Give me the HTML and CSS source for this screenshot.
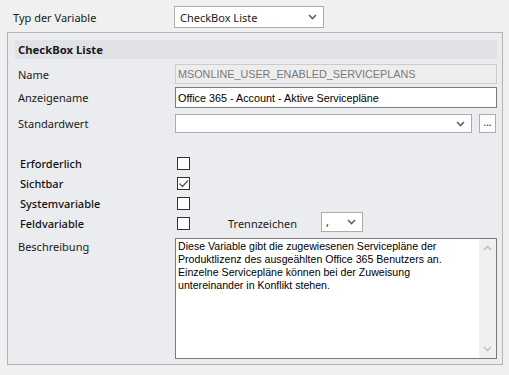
FILE: index.html
```html
<!DOCTYPE html>
<html lang="de">
<head>
    <meta charset="UTF-8">
    <title>Variable bearbeiten</title>
    <link rel="stylesheet" href="styles.css">
</head>
<body>
    <div class="top-row">
        <span class="label top-label">Typ der Variable</span>
        <div class="combo type-combo">
            <span class="combo-text">CheckBox Liste</span>
            <svg class="chevron" width="9" height="6" viewBox="0 0 9 6"><polyline points="1,1 4.5,4.5 8,1" fill="none" stroke="#606060" stroke-width="1.6"/></svg>
        </div>
    </div>

    <div class="panel">
        <div class="panel-head">CheckBox Liste</div>

        <div class="row row-name">
            <span class="label">Name</span>
            <div class="textbox disabled">MSONLINE_USER_ENABLED_SERVICEPLANS</div>
        </div>

        <div class="row row-display">
            <span class="label">Anzeigename</span>
            <div class="textbox active">Office 365 - Account - Aktive Servicepläne</div>
        </div>

        <div class="row row-default">
            <span class="label">Standardwert</span>
            <div class="combo default-combo">
                <span class="combo-text"></span>
                <svg class="chevron" width="9" height="6" viewBox="0 0 9 6"><polyline points="1,1 4.5,4.5 8,1" fill="none" stroke="#606060" stroke-width="1.6"/></svg>
            </div>
            <div class="dots-btn">...</div>
        </div>

        <div class="checks">
            <div class="check-row">
                <span class="label check-label">Erforderlich</span>
                <span class="box"></span>
            </div>
            <div class="check-row">
                <span class="label check-label">Sichtbar</span>
                <span class="box">
                    <svg width="11" height="11" viewBox="0 0 11 11"><polyline points="1.5,5.5 4.5,8.5 10,2.5" fill="none" stroke="#555" stroke-width="1.3"/></svg>
                </span>
            </div>
            <div class="check-row">
                <span class="label check-label">Systemvariable</span>
                <span class="box"></span>
            </div>
            <div class="check-row">
                <span class="label check-label">Feldvariable</span>
                <span class="box"></span>
                <span class="label sep-label">Trennzeichen</span>
                <div class="combo sep-combo">
                    <span class="combo-text">,</span>
                    <svg class="chevron" width="9" height="6" viewBox="0 0 9 6"><polyline points="1,1 4.5,4.5 8,1" fill="none" stroke="#606060" stroke-width="1.6"/></svg>
                </div>
            </div>
        </div>

        <div class="row row-desc">
            <span class="label desc-label">Beschreibung</span>
            <div class="memo">
                <div class="memo-text">Diese Variable gibt die zugewiesenen Servicepläne der Produktlizenz des ausgeählten Office 365 Benutzers an. Einzelne Servicepläne können bei der Zuweisung untereinander in Konflikt stehen.</div>
                <div class="scrollbar">
                    <svg width="9" height="6" viewBox="0 0 9 6"><polyline points="1,5 4.5,1.5 8,5" fill="none" stroke="#c2c2c2" stroke-width="1.6"/></svg>
                    <svg width="9" height="6" viewBox="0 0 9 6"><polyline points="1,1 4.5,4.5 8,1" fill="none" stroke="#c2c2c2" stroke-width="1.6"/></svg>
                </div>
            </div>
        </div>
    </div>
</body>
</html>
```

FILE: styles.css
```css
body { margin: 0; background: #f0f0f0; width: 509px; height: 375px; overflow: hidden; font-family: "Noto Sans", sans-serif; font-size: 11px; color: #1a1a1a; }

.label { font-family: "Noto Sans", sans-serif; font-size: 11px; }

.top-row { display: flex; align-items: center; padding: 6px 0 0 13px; height: 22px; }
.top-label { width: 161px; }

.combo { display: flex; align-items: center; justify-content: space-between; background: white; border: 1px solid #acacac; box-sizing: border-box; padding: 0 6px 0 4px; font-family: "Noto Sans", sans-serif; font-size: 11px; }
.type-combo { width: 150px; height: 22px; padding-left: 5px; }
.chevron { flex: none; }

.panel { margin: 4px 6px 0 7px; border: 1px solid #b4b4b4; background: #ebecf0; padding: 7px 5px 5px 7px; height: 333px; box-sizing: border-box; }
.panel-head { height: 19px; background: #e1e2e7; font-weight: bold; font-size: 11.3px; padding-left: 3px; line-height: 19px; }

.row { display: flex; align-items: center; }
.row > .label { width: 160px; padding-left: 3px; box-sizing: border-box; flex: none; }

.textbox { box-sizing: border-box; width: 322px; padding: 0 2px; font-family: "Liberation Sans", Arial, sans-serif; font-size: 10.8px; display: flex; align-items: center; }
.textbox.disabled { height: 20px; background: #ededed; border: 1px solid #cccccc; color: #7a7a7a; }
.textbox.active { height: 21px; background: white; border: 1px solid #7a7a7a; color: #000; }

.row-name { margin-top: 5px; }
.row-display { margin-top: 3px; }
.row-default { margin-top: 6px; }

.default-combo { width: 297px; height: 19px; }
.dots-btn { width: 17px; height: 19px; margin-left: 7px; border: 1px solid #adadad; background: #fdfdfd; box-sizing: border-box; font-size: 10px; text-align: center; line-height: 15px; }

.checks { margin-top: 20px; }
.check-row { display: flex; align-items: center; height: 20px; }
.check-label { width: 162px; padding-left: 5px; box-sizing: border-box; font-weight: 500; color: #111; }
.box { width: 13px; height: 13px; border: 1px solid #333; background: white; box-sizing: border-box; display: flex; align-items: center; justify-content: center; }
.sep-label { margin-left: 38px; width: 93px; }
.sep-combo { width: 42px; height: 20px; margin-top: -3px; border-color: #adadad; }

.row-desc { margin-top: 5px; align-items: flex-start; }
.desc-label { padding-top: 1px; }
.memo { width: 324px; height: 121px; border: 1px solid #7a7a7a; background: white; box-sizing: border-box; display: flex; }
.memo-text { flex: 1; padding: 1px 2px; font-family: "Liberation Sans", Arial, sans-serif; font-size: 10.6px; line-height: 13px; color: #000; }
.scrollbar { width: 17px; background: #f0f0f0; display: flex; flex-direction: column; justify-content: space-between; align-items: center; padding: 6px 0; box-sizing: border-box; }
```
